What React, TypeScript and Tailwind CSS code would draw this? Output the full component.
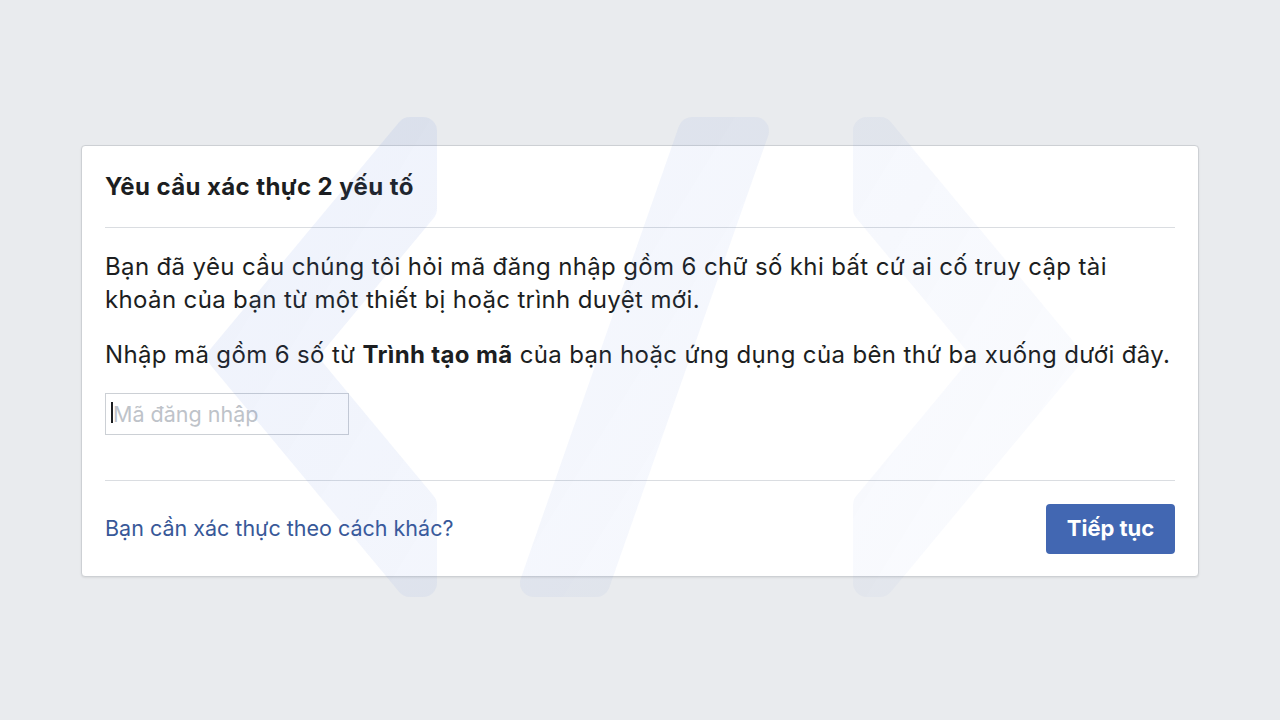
import React from "react";

function Watermark() {
  return (
    <svg
      className="pointer-events-none absolute left-0 top-0"
      width="1280"
      height="720"
      viewBox="0 0 1280 720"
      aria-hidden="true"
    >
      <defs>
        <linearGradient id="wmg" gradientUnits="userSpaceOnUse" x1="200" y1="100" x2="1100" y2="650">
          <stop offset="0" stopColor="#5078dc" stopOpacity="0.1" />
          <stop offset="1" stopColor="#5078dc" stopOpacity="0.02" />
        </linearGradient>
        <mask id="wmm" maskUnits="userSpaceOnUse" x="0" y="0" width="1280" height="720">
          <g fill="#fff" stroke="#fff" strokeWidth="28" strokeLinejoin="round">
            <polygon points="410,131 423,131 423,209 300,357 423,505 423,583 410,583 222,357" />
            <polygon points="692,131 755,131 596,583 534,583" />
            <polygon points="880,131 867,131 867,209 990,357 867,505 867,583 880,583 1068,357" />
          </g>
        </mask>
      </defs>
      <rect x="0" y="0" width="1280" height="720" fill="url(#wmg)" mask="url(#wmm)" />
    </svg>
  );
}

export default function App() {
  const font = { fontFamily: 'Inter, "Liberation Sans", Arial, sans-serif' };
  return (
    <div
      className="relative flex h-[720px] w-full justify-center overflow-hidden bg-[#e9ebee] pt-[145px] text-[#1c1e21]"
      style={font}
    >
      <div className="flex h-[432px] w-[1118px] flex-col rounded-[4px] border border-[#cdd0d4] bg-white shadow-[0_1px_2px_rgba(0,0,0,0.08)]">
        <div className="flex h-[81px] items-center px-[23px]">
          <h2 className="text-[24px] font-bold tracking-[0.4px]">Yêu cầu xác thực 2 yếu tố</h2>
        </div>
        <div className="mx-[23px] h-px bg-[#dadde1]" />
        <div className="h-[252px] px-[23px] pt-[22px] text-[24px] leading-[33px] tracking-[0.36px]">
          <p>
            Bạn đã yêu cầu chúng tôi hỏi mã đăng nhập gồm 6 chữ số khi bất cứ ai cố truy cập tài
            <br />
            khoản của bạn từ một thiết bị hoặc trình duyệt mới.
          </p>
          <p className="mt-[22px] whitespace-nowrap">
            Nhập mã gồm 6 số từ <span className="font-bold">Trình tạo mã</span> của bạn hoặc ứng dụng của bên thứ ba xuống dưới đây.
          </p>
          <div className="relative mt-[22px] h-[42px] w-[244px] tracking-normal">
            <input
              type="text"
              placeholder="Mã đăng nhập"
              className="h-full w-full border border-[#ccd0d5] bg-transparent px-[7px] text-[21.5px] text-[#1c1e21] outline-none placeholder:text-[#bec3c9]"
              style={font}
            />
            <span className="pointer-events-none absolute left-[6px] top-[9px] h-[21px] w-[2px] bg-[#1c1e21]" />
          </div>
        </div>
        <div className="mx-[23px] h-px bg-[#dadde1]" />
        <div className="flex h-[95px] items-center justify-between px-[23px]">
          <a href="#" className="text-[21.5px] text-[#385898]">
            Bạn cần xác thực theo cách khác?
          </a>
          <button
            type="button"
            className="flex h-[50px] w-[129px] items-center justify-center rounded-[4px] bg-[#4267b2] text-[22px] font-bold text-white"
            style={font}
          >
            Tiếp tục
          </button>
        </div>
      </div>
      <Watermark />
    </div>
  );
}
